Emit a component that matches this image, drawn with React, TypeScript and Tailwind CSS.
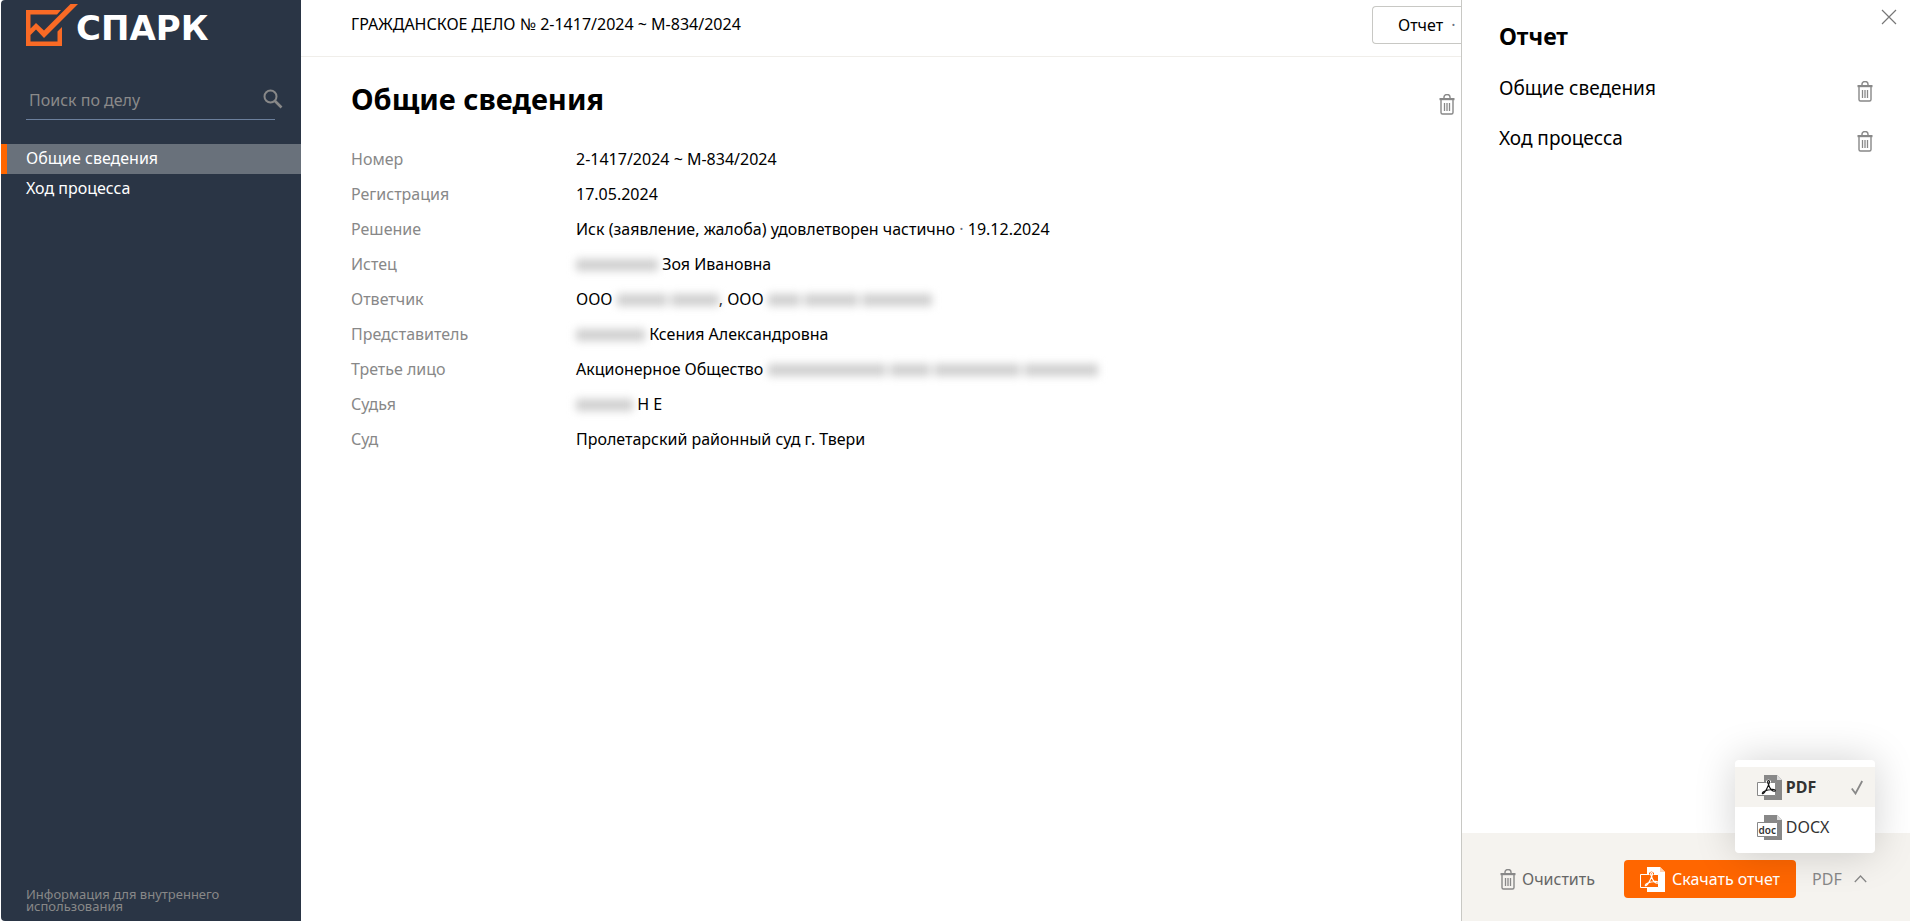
import React from "react";

const caseRows = [
  { label: "Номер", value: <>2-1417/2024 ~ М-834/2024</> },
  { label: "Регистрация", value: <>17.05.2024</> },
  {
    label: "Решение",
    value: (
      <>
        Иск (заявление, жалоба) удовлетворен частично <span className="text-gray-500">·</span> 19.12.2024
      </>
    ),
  },
  { label: "Истец", value: <><Hidden words={["w-[82px]"]} /> Зоя Ивановна</> },
  {
    label: "Ответчик",
    value: (
      <>
        ООО <Hidden words={["w-[50px]", "w-[48px]"]} />, ООО <Hidden words={["w-[32px]", "w-[54px]", "w-[70px]"]} />
      </>
    ),
  },
  { label: "Представитель", value: <><Hidden words={["w-[69px]"]} /> Ксения Александровна</> },
  {
    label: "Третье лицо",
    value: (
      <>
        Акционерное Общество <Hidden words={["w-[118px]", "w-[40px]", "w-[86px]", "w-[74px]"]} />
      </>
    ),
  },
  { label: "Судья", value: <><Hidden words={["w-[57px]"]} /> Н Е</> },
  { label: "Суд", value: <>Пролетарский районный суд г. Твери</> },
];

const sections = ["Общие сведения", "Ход процесса"];

function Hidden({ words }: { words: string[] }) {
  return (
    <span className="inline-flex gap-1 align-middle blur-[4px]" aria-hidden="true">
      {words.map((width, i) => (
        <span key={i} className={`h-3 bg-[#cfcfcf] ${width}`} />
      ))}
    </span>
  );
}

function TrashIcon() {
  return (
    <svg width="16" height="21" viewBox="0 0 16 21" fill="none" className="shrink-0">
      <path d="M5 4V3A3 2.5 0 0 1 11 3V4" stroke="#888" strokeWidth="1.4" />
      <path d="M0.5 4H15.5V6.2H0.5Z" fill="#888" />
      <path d="M2 6V18.5Q2 20 3.5 20H12.5Q14 20 14 18.5V6" stroke="#888" strokeWidth="1.4" />
      <path d="M5.5 9V17M8 9V17M10.5 9V17" stroke="#888" strokeWidth="1.3" />
    </svg>
  );
}

function PdfIcon({ page, box, mark, fold }: { page: string; box: string; mark: string; fold: string }) {
  return (
    <svg width="25" height="25" viewBox="0 0 25 25" fill="none" className="shrink-0">
      <path d="M7 0H20L25 5V25H7Z" fill={page} />
      <path d="M20 0V5H25Z" fill={fold} />
      <path d="M0.5 7.5H18.5V20.5H0.5Z" fill={box} stroke={page} />
      <path d="M9 7.500V6Q11.500 3 14 6V7.500Z" fill={box} />
      <path
        d="M11.500 9.500C10.300 7.500 10.300 5.500 11.500 5.500C12.800 5.500 12.700 7.500 11.500 10C10 13.500 8 17.500 6.300 18.600C5.300 19.200 4.800 18.300 5.800 17.300C8 15.500 13.500 14 17 14.500C19 15 18.500 16.400 17 16.200C14.500 15.800 12.500 12.500 11.500 9.500"
        stroke={mark}
        strokeWidth="1.1"
      />
    </svg>
  );
}

function DocIcon() {
  return (
    <svg width="25" height="25" viewBox="0 0 25 25" fill="none" className="shrink-0">
      <path d="M7 0H20L25 5V25H7Z" fill="#888" />
      <path d="M20 0V5H25Z" fill="#ddd" />
      <path d="M0.5 7.5H20.5V21.5H0.5Z" fill="#fff" stroke="#888" />
      <text x="1.5" y="19" fontSize="10" fontWeight="600" fontFamily="Noto Sans, sans-serif" fill="#333">
        doc
      </text>
    </svg>
  );
}

function Sidebar() {
  return (
    <aside className="ml-px flex w-[300px] shrink-0 flex-col rounded-l bg-[#2a3545]">
      <a href="#" className="flex h-[50px] items-start pl-[25px] pt-1">
        <svg width="50" height="42" viewBox="0 0 50 42" fill="none" className="shrink-0 overflow-visible">
          <path d="M35 6H0V42H36V23L31.5 27.5V37.5H4.5V31L10 25.5L18 34L52 0H44.5L18 26.5L10 19L4.5 24.5V10.5H31Z" fill="#f96a25" />
        </svg>
        <span className="pt-1 font-['DejaVu_Sans',sans-serif] text-[34px] font-bold leading-10 text-white">СПАРК</span>
      </a>

      <label className="ml-[25px] mr-[18px] mt-8 flex h-[38px] items-start">
        <input
          type="text"
          aria-label="Поиск по делу"
          placeholder="Поиск по делу"
          className="h-[38px] w-full min-w-0 border-b border-[#6b7f9c] pb-0.5 pl-[3px] text-[16px] text-white placeholder-[#8a8a8a] outline-none"
        />
        <svg width="20" height="20" viewBox="0 0 20 20" fill="none" className="-ml-3 mt-[7px] shrink-0">
          <circle cx="7.5" cy="7.5" r="6" stroke="#888" strokeWidth="2" />
          <path d="M12 12L18.5 18.5" stroke="#888" strokeWidth="2.6" />
        </svg>
      </label>

      <nav className="mt-6 flex flex-col text-[16px] leading-7 text-white">
        <a href="#info" className="border-l-[6px] border-[#ff6600] bg-[#69717b] pb-0.5 pl-[19px]">Общие сведения</a>
        <a href="#progress" className="border-l-[6px] border-transparent pb-0.5 pl-[19px]">Ход процесса</a>
      </nav>

      <p className="ml-[25px] mt-auto w-[220px] pb-[9px] text-[13px] leading-3 text-[#888]">
        Информация для внутреннего использования
      </p>
    </aside>
  );
}

function ReportPanel() {
  return (
    <aside className="flex w-[449px] shrink-0 flex-col border-l border-[#c8c8c4]">
      <div className="flex items-start justify-between pl-[37px] pr-[13px]">
        <h2 className="mt-5 text-[23px] font-bold leading-8">Отчет</h2>
        <button type="button" aria-label="Закрыть" className="mt-[9px]">
          <svg width="16" height="16" viewBox="0 0 16 16" fill="none">
            <path d="M1 1L15 15M15 1L1 15" stroke="#777" strokeWidth="1.2" />
          </svg>
        </button>
      </div>

      <ul className="mt-[11px] px-[37px]">
        {sections.map((name) => (
          <li key={name} className="flex h-[50px] items-center justify-between text-[19px]">
            {name}
            <button type="button" aria-label={`Удалить: ${name}`} className="mt-1.5">
              <TrashIcon />
            </button>
          </li>
        ))}
      </ul>

      <footer className="mt-auto flex h-[88px] items-center bg-[#f5f3ef] pl-[38px] pt-1">
        <button type="button" className="flex items-center gap-1.5 text-[16px] text-[#666]">
          <TrashIcon />
          Очистить
        </button>
        <button type="button" className="ml-[29px] flex h-[38px] items-center gap-[7px] rounded bg-[#ff6600] px-4 text-[16px] text-white">
          <PdfIcon page="#fff" box="#ff6600" mark="#fff" fold="#ffd0b0" />
          Скачать отчет
        </button>
        <div className="relative ml-4">
          <button type="button" aria-haspopup="listbox" aria-expanded="true" className="flex items-center gap-3 text-[16px] text-[#888]">
            PDF
            <svg width="13" height="8" viewBox="0 0 13 8" fill="none">
              <path d="M0.8 7L6.5 1L12.2 7" stroke="#888" strokeWidth="1.3" />
            </svg>
          </button>

          {/* Format menu */}
          <div role="listbox" className="absolute -right-2 bottom-[38px] w-[140px] rounded bg-white pb-1.5 pt-[7px] text-[16px] text-[#333] shadow-[0_0_40px_rgba(0,0,0,0.18)]">
            <button type="button" role="option" aria-selected="true" className="flex h-10 w-full items-center gap-1 bg-[#f5f3ef] pl-[22px] pr-3 font-bold">
              <PdfIcon page="#888" box="#fff" mark="#111" fold="#ddd" />
              PDF
              <svg width="12" height="15" viewBox="0 0 12 15" fill="none" className="ml-auto">
                <path d="M0.8 8.5L4.5 13.5L11.2 1" stroke="#888" strokeWidth="1.8" />
              </svg>
            </button>
            <button type="button" role="option" aria-selected="false" className="flex h-10 w-full items-center gap-1 pl-[22px] pr-3">
              <DocIcon />
              DOCX
            </button>
          </div>
        </div>
      </footer>
    </aside>
  );
}

const App: React.FC = () => {
  return (
    <div className="flex min-h-screen bg-white font-['Noto_Sans',sans-serif] text-black">
      <Sidebar />

      <main className="min-w-0 flex-1">
        <header className="flex h-[57px] items-start justify-between border-b border-[#f0eeea] pl-[50px] pt-1.5">
          <h1 className="text-[16px] leading-9">ГРАЖДАНСКОЕ ДЕЛО № 2-1417/2024 ~ М-834/2024</h1>
          <button type="button" className="h-[38px] w-[89px] rounded-l border border-r-0 border-[#c8c8c4] pl-[25px] text-left text-[16px]">
            Отчет <span className="ml-1 text-gray-500">·</span>
          </button>
        </header>

        <section id="info" className="pl-[50px]">
          <div className="flex h-[84px] items-center justify-between pr-1.5">
            <h2 className="text-[29px] font-bold leading-9">Общие сведения</h2>
            <button type="button" aria-label="Удалить раздел" className="mt-2.5">
              <TrashIcon />
            </button>
          </div>

          <table className="text-[16px]">
            <tbody>
              {caseRows.map((row) => (
                <tr key={row.label} className="h-[35px]">
                  <th scope="row" className="w-[225px] text-left font-normal text-[#888]">{row.label}</th>
                  <td>{row.value}</td>
                </tr>
              ))}
            </tbody>
          </table>
        </section>
      </main>

      <ReportPanel />
    </div>
  );
};

export default App;
